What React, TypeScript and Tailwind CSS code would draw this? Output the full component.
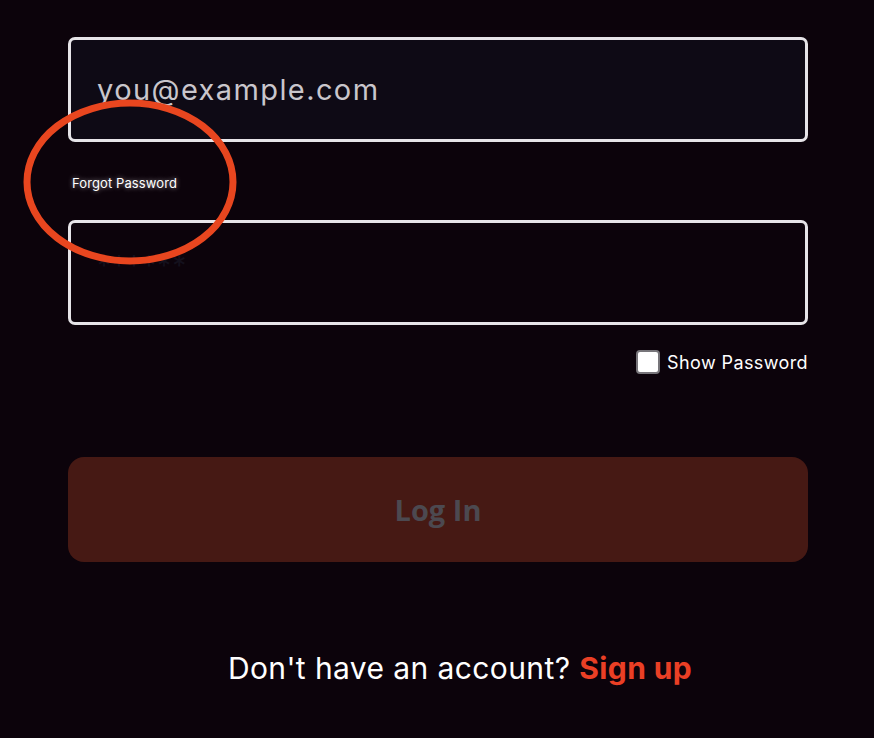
import { useState } from "react"

const font = { fontFamily: "Inter, 'Noto Sans', sans-serif" }

const App = () => {
  const [email, setEmail] = useState("")
  const [password, setPassword] = useState("")
  const [showPassword, setShowPassword] = useState(false)

  return (
    <div className="relative min-h-[738px] w-full bg-[#0c030b] text-white" style={font}>
      <div className="flex flex-col px-[68px] pt-[37px] w-[876px]">
        <input
          type="email"
          value={email}
          onChange={(e) => setEmail(e.target.value)}
          placeholder="you@example.com"
          className="h-[105px] w-full rounded-[7px] border-[3px] border-[#e6e4e8] bg-[#0e0a15] px-[26px] text-[29px] tracking-[1.4px] text-white placeholder:text-[#c9c6cc] outline-none"
        />
        <a
          href="#"
          className="mt-[34px] ml-[4px] h-[14px] text-[13px] tracking-[0.1px] leading-[14px] text-white [text-shadow:0_0_5px_rgba(255,255,255,0.6)]"
        >
          Forgot Password
        </a>
        <input
          type={showPassword ? "text" : "password"}
          value={password}
          onChange={(e) => setPassword(e.target.value)}
          placeholder="******"
          className="mt-[30px] h-[105px] w-full rounded-[7px] border-[3px] border-[#e6e4e8] bg-[#0c030b] px-[26px] pb-[14px] text-[28px] tracking-[1px] text-white placeholder:text-[#14111d] outline-none"
        />
        <label className="mt-[22px] flex items-center justify-end gap-[7px] text-[18px] tracking-[0.4px] text-white">
          <input
            type="checkbox"
            checked={showPassword}
            onChange={(e) => setShowPassword(e.target.checked)}
            className="h-[24px] w-[24px] appearance-none rounded-[4px] border-[2px] border-[#77757a] bg-white"
          />
          <span className="mt-[2px]">Show Password</span>
        </label>
        <button
          disabled
          className="mt-[81px] h-[105px] w-full rounded-[16px] bg-[#461914] text-[29px] font-bold text-[#4c4950]"
          style={{ fontFamily: "'Open Sans', sans-serif" }}
        >
          Log In
        </button>
        <p className="mt-[84px] pl-[44px] text-center text-[30px] tracking-[0.4px] text-white">
          Don't have an account?{" "}
          <a href="#" className="font-bold text-[#ea3f25]">
            Sign up
          </a>
        </p>
      </div>

      <svg className="absolute left-0 top-0 pointer-events-none" width="260" height="280">
        <ellipse cx="130" cy="182" rx="103" ry="79" fill="none" stroke="#e8461f" strokeWidth="7" />
      </svg>
    </div>
  )
}

export default App
